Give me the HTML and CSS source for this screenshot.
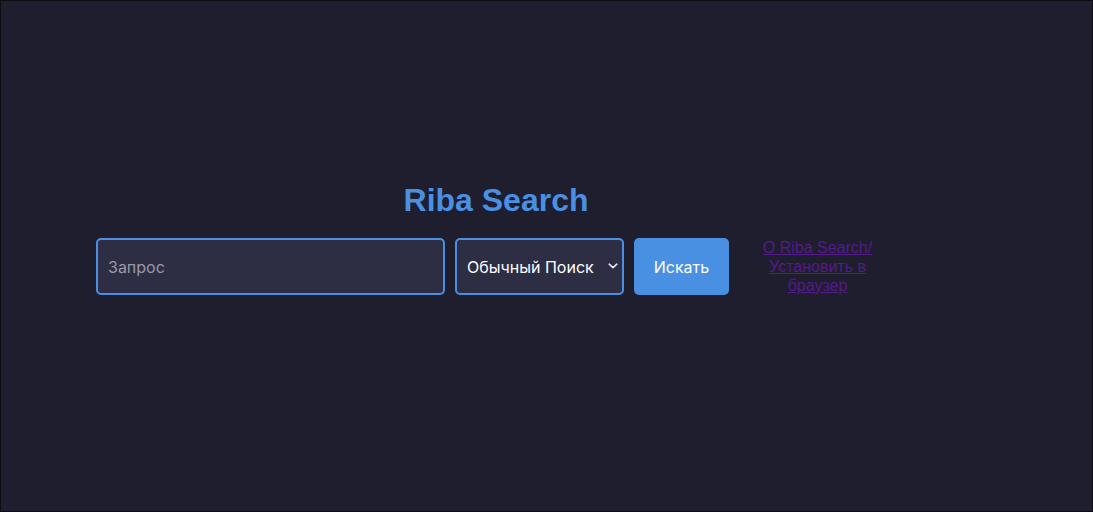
FILE: index.html
```html
<!DOCTYPE html>
<html lang="ru">
<head>
<meta charset="utf-8">
<title>Riba Search</title>
<link rel="stylesheet" href="styles.css">
</head>
<body>
<main class="page">
  <div class="wrap">
    <h1 class="title">Riba Search</h1>
    <form class="search-row" onsubmit="return false">
      <input class="query" type="text" placeholder="Запрос">
      <div class="select-box">
        <select class="mode">
          <option>Обычный Поиск</option>
        </select>
        <svg class="chev" width="10" height="6" viewBox="0 0 10 6" aria-hidden="true">
          <path d="M1.2 1.2 L5 4.6 L8.8 1.2" fill="none" stroke="#e8e8f0" stroke-width="1.6" stroke-linecap="round" stroke-linejoin="round"/>
        </svg>
      </div>
      <button class="go" type="submit">Искать</button>
      <a class="about" href="#">О Riba Search/ Установить в браузер</a>
    </form>
  </div>
</main>
</body>
</html>
```

FILE: styles.css
```css
* { box-sizing: border-box; }
html, body { margin: 0; height: 100%; }
body {
  background: #1e1e2e;
  border: 1px solid #0c0c12;
  font-family: "Liberation Sans", Arial, sans-serif;
  color: #e0e0e0;
}
.page {
  padding-top: 181px;
  padding-left: 95px;
}
.wrap {
  width: 800px;
}
.title {
  margin: 0 0 19px;
  text-align: center;
  font-size: 32px;
  font-weight: bold;
  color: #4a90e2;
  line-height: 37px;
}
.search-row {
  display: flex;
  align-items: center;
  gap: 10px;
}
.query, .mode, .go {
  font-family: Inter, "Noto Sans", sans-serif;
  font-size: 16px;
  height: 57px;
  border-radius: 5px;
}
.query {
  width: 349px;
  padding: 0 10px;
  background: #2d2d44;
  border: 2px solid #4a90e2;
  color: #ffffff;
  outline: none;
}
.query::placeholder { color: #9a9aa6; }
.select-box {
  position: relative;
  width: 169px;
  height: 57px;
}
.mode {
  -webkit-appearance: none;
  appearance: none;
  width: 100%;
  padding: 0 24px 0 10px;
  background: #2d2d44;
  border: 2px solid #4a90e2;
  color: #ffffff;
  outline: none;
}
.chev {
  position: absolute;
  left: 153px;
  top: 25px;
  pointer-events: none;
}
.go {
  width: 95px;
  background: #4a90e2;
  color: #ffffff;
  border: none;
  cursor: pointer;
}
.about {
  flex: 1;
  text-align: center;
  color: #551a8b;
  font-size: 16px;
  line-height: 19px;
  padding: 0 22px;
}
```
